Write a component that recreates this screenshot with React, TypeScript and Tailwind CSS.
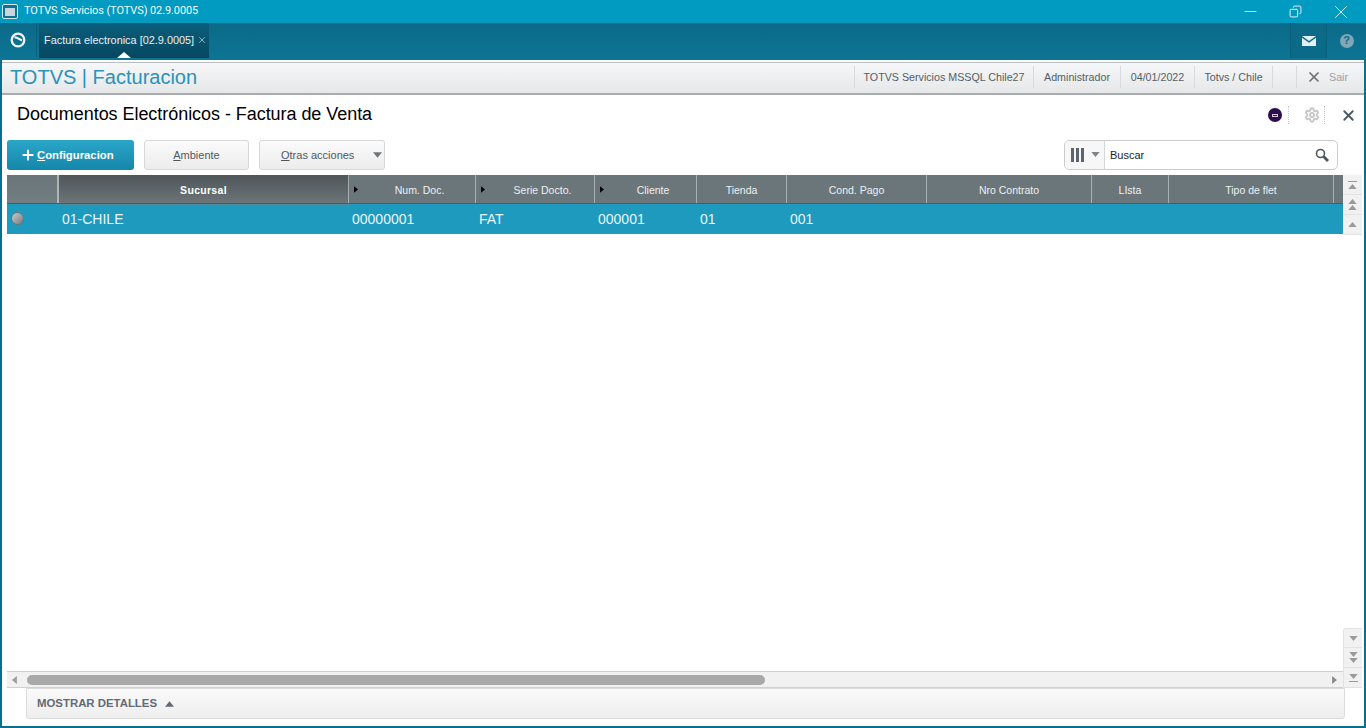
import { X, Plus, Minus, Settings, Copy } from 'lucide-react';

const columns = [
  { label: 'Sucursal', width: 'w-[290px]', active: true },
  { label: 'Num. Doc.', width: 'w-[127px]', sort: true },
  { label: 'Serie Docto.', width: 'w-[119px]', sort: true },
  { label: 'Cliente', width: 'w-[102px]', sort: true },
  { label: 'Tienda', width: 'w-[90px]' },
  { label: 'Cond. Pago', width: 'w-[140px]' },
  { label: 'Nro Contrato', width: 'w-[165px]' },
  { label: 'LIsta', width: 'w-[77px]' },
  { label: 'Tipo de flet', width: 'w-[165px]' },
];

const cells = [
  { text: '01-CHILE', width: 'w-[290px]' },
  { text: '00000001', width: 'w-[127px]' },
  { text: 'FAT', width: 'w-[119px]' },
  { text: '000001', width: 'w-[102px]' },
  { text: '01', width: 'w-[90px]' },
  { text: '001', width: 'w-[140px]' },
];

function Tri({ dir = 'up', className = '' }: { dir?: 'up' | 'down' | 'left' | 'right'; className?: string }) {
  const points = { up: '0,6 5,0 10,6', down: '0,0 10,0 5,6', left: '6,0 6,10 0,5', right: '0,0 0,10 6,5' }[dir];
  const box = dir === 'up' || dir === 'down' ? '0 0 10 6' : '0 0 6 10';
  return (
    <svg viewBox={box} className={className} fill="currentColor">
      <polygon points={points} />
    </svg>
  );
}

function VScrollBtn({ kind, up, className = '' }: { kind: 'edge' | 'double' | 'single'; up: boolean; className?: string }) {
  return (
    <div className={`h-[20px] flex flex-col items-center justify-center gap-[1px] bg-[#f1f1f1] border-b border-[#e2e2e2] text-[#9a9a9a] ${className}`}>
      {kind === 'edge' && up && <div className="w-[9px] h-[1px] bg-[#9a9a9a] mb-[1px]" />}
      <Tri dir={up ? 'up' : 'down'} className="w-[9px] h-[5px]" />
      {kind === 'double' && <Tri dir={up ? 'up' : 'down'} className="w-[9px] h-[5px]" />}
      {kind === 'edge' && !up && <div className="w-[9px] h-[1px] bg-[#9a9a9a] mt-[1px]" />}
    </div>
  );
}

export default function App() {
  return (
    <div className="w-[1366px] h-[728px] overflow-hidden flex flex-col bg-[#0b6e8c] font-['Liberation_Sans',sans-serif]">
      {/* window title */}
      <div className="h-[23px] shrink-0 bg-[#019ac0] flex items-center pl-[2px] text-white">
        <div className="w-[16px] h-[15px] rounded-[2px] border border-[#d5e6ec] bg-[#0b7493] flex items-center justify-center">
          <div className="w-[10px] h-[8px] bg-[#c9d7dd]" />
        </div>
        <span className="ml-[6px] text-[11px] tracking-[-0.1px] font-['Roboto',sans-serif] text-[#f2fafc]">TOTVS Servicios (TOTVS) 02.9.0005</span>
        <div className="ml-auto flex items-center pr-[3px]">
          <div className="w-[45px] flex justify-center"><Minus size={19} strokeWidth={0.9} /></div>
          <div className="w-[45px] flex justify-center"><Copy size={13} strokeWidth={1.6} className="-scale-x-100" /></div>
          <div className="w-[45px] flex justify-center"><X size={22} strokeWidth={0.9} /></div>
        </div>
      </div>

      {/* tab bar */}
      <div className="h-[37px] shrink-0 flex bg-gradient-to-b from-[#0b6a88] to-[#0d7594]">
        <div className="w-[37px] h-[34px] flex items-center justify-center border-r border-[#0b5f7b]">
          <svg viewBox="0 0 20 20" className="w-[18px] h-[18px]" fill="none" stroke="#eef6f8">
            <circle cx="10" cy="10" r="7" strokeWidth="2.6" />
            <path d="M6 7.2 C9 6.6 11.5 9.6 14.5 10.4" strokeWidth="2.4" />
          </svg>
        </div>
        <div className="relative ml-[2px] w-[170px] h-[35px] bg-gradient-to-b from-[#0a5f7c] to-[#07475f] flex items-center pl-[5px] text-[#e7f1f4]">
          <span className="text-[10.9px] whitespace-nowrap">Factura electronica [02.9.0005]</span>
          <X size={10} className="ml-[3px] mb-[2px] text-[#a9c3cd]" />
          <div className="absolute left-[78px] bottom-0 w-0 h-0 border-x-[7px] border-x-transparent border-b-[6px] border-b-white" />
        </div>
        <div className="ml-auto flex h-[35px]">
          <div className="w-[37px] bg-[#0b6a88] border-x border-[#0a5f7b] flex items-center justify-center">
            <svg viewBox="0 0 14 10" className="w-[14px] h-[10px]">
              <path d="M0 0 H14 L7 5 Z" fill="#e3eff3" />
              <path d="M0 1.8 L7 6.8 L14 1.8 V10 H0 Z" fill="#e3eff3" />
            </svg>
          </div>
          <div className="w-[39px] flex items-center justify-center">
            <div className="w-[14px] h-[14px] rounded-full bg-[#7fa7b6] flex items-center justify-center text-[11px] font-bold text-[#0b6a88]">?</div>
          </div>
        </div>
      </div>

      {/* body */}
      <div className="flex-1 min-h-0 mx-[2px] mb-[2px] bg-white flex flex-col">
        {/* module header */}
        <div className="h-[33px] shrink-0 mt-[2px] pb-[2px] border-t border-[#b9bcbe] border-b-2 border-b-[#a9adaf] bg-gradient-to-b from-[#f6f7f8] to-[#e5e7e9] flex items-center">
          <span className="ml-[8px] text-[20px] text-[#2a93b9] whitespace-nowrap">TOTVS | Facturacion</span>
          <div className="ml-auto flex items-center h-[22px] text-[10.7px] text-[#555e66]">
            <div className="w-[179px] h-full flex items-center justify-center border-l border-[#d8dadc]">TOTVS Servicios MSSQL Chile27</div>
            <div className="w-[87px] h-full flex items-center justify-center border-l border-[#d8dadc]">Administrador</div>
            <div className="w-[74px] h-full flex items-center justify-center border-l border-[#d8dadc]">04/01/2022</div>
            <div className="w-[79px] h-full flex items-center justify-center border-x border-[#d8dadc]">Totvs / Chile</div>
            <div className="ml-[23px] w-[68px] h-full flex items-center border-l border-[#d8dadc] pl-[9px]">
              <X size={16} strokeWidth={2.6} className="text-[#6b7379]" />
              <span className="ml-[7px] text-[#9aa0a5]">Sair</span>
            </div>
          </div>
        </div>

        {/* page title */}
        <div className="h-[44px] shrink-0 flex items-center pb-[4px]">
          <h1 className="ml-[15px] mb-[2px] text-[18px] tracking-[-0.05px] text-black whitespace-nowrap">Documentos Electrónicos - Factura de Venta</h1>
          <div className="ml-auto flex items-center pr-[7px]">
            <div className="w-[14px] h-[14px] rounded-full bg-[#2e0d4e] flex items-center justify-center">
              <div className="w-[6px] h-[3px] border border-white/80" />
            </div>
            <div className="w-[1px] h-[18px] ml-[6px] border-l border-dotted border-[#c8c8c8]" />
            <Settings size={16} strokeWidth={3} className="ml-[15px] text-[#c6c8ca]" />
            <div className="w-[1px] h-[18px] ml-[4px] border-l border-dotted border-[#c8c8c8]" />
            <X size={17} strokeWidth={2.6} className="ml-[15px] text-[#4b5560]" />
          </div>
        </div>

        {/* toolbar */}
        <div className="h-[31px] shrink-0 flex items-center pl-[5px] text-[#50585f]">
          <button className="w-[127px] h-[30px] pt-[1px] pl-[13px] rounded-[3px] bg-gradient-to-b from-[#2aa6c9] to-[#1487aa] text-white text-[11.3px] font-bold flex items-center">
            <Plus size={16} strokeWidth={2.8} className="mr-[1px]" />
            <span><u>C</u>onfiguracion</span>
          </button>
          <button className="ml-[10px] w-[105px] h-[30px] pt-[1px] rounded-[3px] border border-[#d8d8d8] bg-gradient-to-b from-[#fbfbfb] to-[#ececec] text-[11px]">
            <u>A</u>mbiente
          </button>
          <button className="ml-[10px] w-[126px] h-[30px] pt-[1px] rounded-[3px] border border-[#d8d8d8] bg-gradient-to-b from-[#fbfbfb] to-[#ececec] text-[11px] flex items-center pl-[21px]">
            <span><u>O</u>tras acciones</span>
            <Tri dir="down" className="w-[9px] h-[6px] ml-[19px] text-[#6e767c]" />
          </button>
          <div className="ml-auto mr-[26px] w-[274px] h-[30px] rounded-[5px] border border-[#c9cbcd] flex items-center overflow-hidden">
            <div className="w-[40px] h-full border-r border-[#d4d6d8] bg-[#f7f7f7] flex items-center pl-[6px] gap-[2px]">
              <div className="w-[3px] h-[14px] bg-[#5c6470]" />
              <div className="w-[3px] h-[14px] bg-[#5c6470]" />
              <div className="w-[3px] h-[14px] bg-[#5c6470]" />
              <Tri dir="down" className="w-[9px] h-[5px] ml-[5px] text-[#7d858b]" />
            </div>
            <span className="ml-[5px] pt-[1px] text-[11px] text-[#222]">Buscar</span>
            <svg viewBox="0 0 14 14" className="ml-auto mr-[8px] w-[14px] h-[14px]" fill="none" stroke="#4f575e">
              <circle cx="5.5" cy="5.5" r="4" strokeWidth="1.6" />
              <path d="M8.6 8.6 L13 13" strokeWidth="2.8" />
            </svg>
          </div>
        </div>

        {/* grid + vertical scroll */}
        <div className="flex-1 min-h-0 mt-[5px] pl-[5px] flex">
          <div className="flex-1 min-w-0 flex flex-col">
            <div className="h-[29px] shrink-0 flex bg-[#6b767b] border-b border-[#54595c] text-[10.5px] text-[#edf0f1]">
              <div className="w-[52px] border-r-2 border-[#d8dcdd]/60 bg-gradient-to-b from-[#6a7579] to-[#737e82]" />
              {columns.map((c) => (
                <div
                  key={c.label}
                  className={`${c.width} relative shrink-0 pt-[4px] flex items-center justify-center border-r border-[#c4cacc]/70 ${c.active ? 'bg-gradient-to-b from-[#4e5659] to-[#6d7578] font-bold text-white tracking-[0.3px]' : ''}`}
                >
                  {c.sort && <Tri dir="right" className="absolute left-[5px] top-[11px] w-[4px] h-[7px] text-black" />}
                  <span className={c.sort ? 'ml-[15px]' : ''}>{c.label}</span>
                </div>
              ))}
            </div>
            <div className="h-[30px] shrink-0 flex bg-[#1d9abd] text-[14px] text-[#e8f5f9]">
              <div className="w-[52px] flex items-center pl-[4px] border-b border-dotted border-[#4a8ba0]">
                <div className="w-[13px] h-[13px] rounded-full bg-gradient-to-br from-[#c9cdd0] to-[#767c80] border border-[#6d7478]" />
              </div>
              {cells.map((c, i) => (
                <div key={c.text} className={`${c.width} shrink-0 pt-[1px] flex items-center ${i === 0 ? 'pl-[2px] border border-dotted border-[#4a8ba0]' : 'pl-[3px]'}`}>
                  {c.text}
                </div>
              ))}
            </div>
            <div className="flex-1" />
            {/* horizontal scroll */}
            <div className="h-[17px] shrink-0 flex items-center border-y border-[#cfd1d2] bg-[#f1f1f1]">
              <Tri dir="left" className="ml-[5px] w-[5px] h-[8px] text-[#9a9a9a]" />
              <div className="ml-[10px] w-[738px] h-[10px] rounded-full bg-[#a9a9a9]" />
              <Tri dir="right" className="ml-auto mr-[6px] w-[5px] h-[8px] text-[#8a8a8a]" />
            </div>
          </div>
          <div className="w-[19px] shrink-0 flex flex-col mr-[2px]">
            <VScrollBtn kind="edge" up />
            <VScrollBtn kind="double" up />
            <VScrollBtn kind="single" up />
            <div className="flex-1" />
            <VScrollBtn kind="single" up={false} className="rounded-tl-[3px] border-l border-t border-[#dcdcdc]" />
            <VScrollBtn kind="double" up={false} className="border-l border-[#dcdcdc]" />
            <VScrollBtn kind="edge" up={false} className="border-l border-[#dcdcdc]" />
          </div>
        </div>

        {/* details footer */}
        <div className="h-[31px] shrink-0 ml-[24px] mr-[19px] mb-[7px] rounded-b-[3px] border border-[#dcdcdc] bg-gradient-to-b from-[#fafafa] to-[#eeeeee] flex items-center pl-[10px] text-[#626b75]">
          <span className="text-[11.4px] font-bold">MOSTRAR DETALLES</span>
          <Tri dir="up" className="ml-[8px] w-[9px] h-[6px]" />
        </div>
      </div>
    </div>
  );
}
